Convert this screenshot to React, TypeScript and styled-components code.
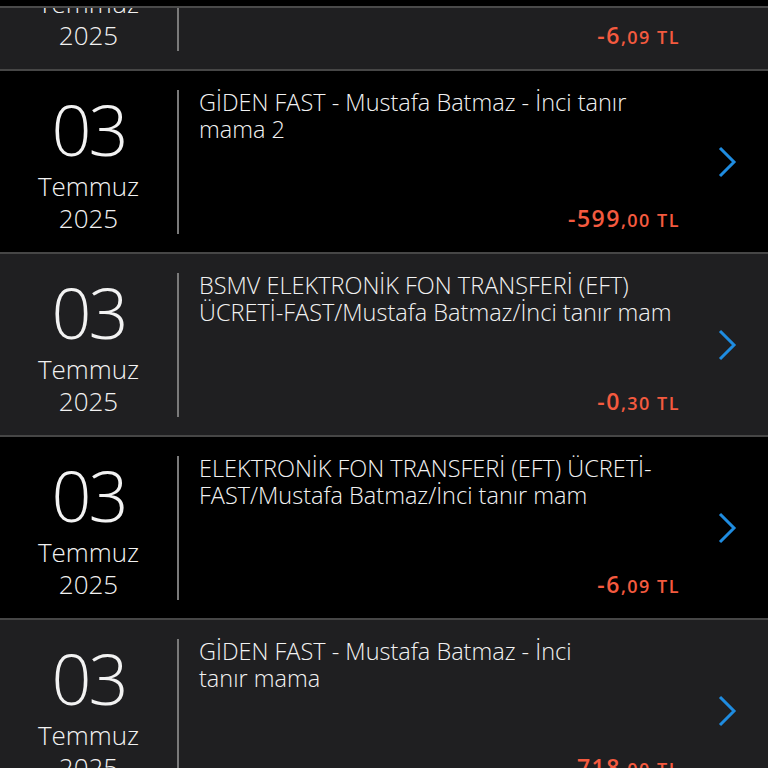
import styled, { createGlobalStyle } from 'styled-components';

const GlobalStyle = createGlobalStyle`
  html, body {
    margin: 0;
    padding: 0;
    background: #000;
    overflow: hidden;
  }
  body {
    font-family: "Open Sans", "Noto Sans", "DejaVu Sans", sans-serif;
    color: #f2f2f2;
  }
`;

const TopEdge = styled.div`
  position: fixed;
  top: 0;
  left: 0;
  right: 0;
  height: 6px;
  background: #000;
  border-bottom: 2px solid #4a4a4a;
  z-index: 2;
`;

const List = styled.div`
  display: flex;
  flex-direction: column;
  margin-top: -112px;
`;

const Row = styled.div<{ $alt: boolean }>`
  display: flex;
  height: 181px;
  background: ${(p) => (p.$alt ? '#1f1f21' : '#000')};
  border-bottom: 2px solid #464646;
`;

const DateCol = styled.div`
  width: 177px;
  flex-shrink: 0;
  display: flex;
  flex-direction: column;
  align-items: center;
  padding-top: 20px;
  box-sizing: border-box;
  font-weight: 300;
`;

const Day = styled.div`
  font-size: 70px;
  line-height: 76px;
  letter-spacing: -3px;
  margin-bottom: 3px;
`;

const DateLine = styled.div`
  font-size: 26px;
  line-height: 32px;
`;

const Divider = styled.div`
  width: 2px;
  margin: 19px 0 18px;
  background: #7a7a7a;
  flex-shrink: 0;
`;

const Body = styled.div`
  flex: 1;
  display: flex;
  flex-direction: column;
  justify-content: space-between;
  padding: 18px 0 19px 20px;
  min-width: 0;
`;

const Description = styled.div`
  font-size: 23.5px;
  line-height: 27px;
  font-weight: 300;
  white-space: nowrap;
`;

const Amount = styled.div`
  align-self: flex-end;
  color: #f45a3f;
  font-weight: 600;
  font-size: 23px;
  line-height: 26px;
  letter-spacing: 1.5px;
  margin-right: -1px;
  white-space: nowrap;
`;

const Cents = styled.span`
  font-size: 18px;
`;

const ChevronCol = styled.div`
  width: 89px;
  flex-shrink: 0;
  display: flex;
  align-items: center;
  justify-content: center;
  padding-left: 7px;
  box-sizing: border-box;
`;

const Chevron = () => (
  <svg width="20" height="32" viewBox="0 0 20 32" fill="none">
    <polyline
      points="3,2 17,16 3,30"
      stroke="#1f8ce0"
      strokeWidth="3"
      strokeLinecap="butt"
      strokeLinejoin="miter"
    />
  </svg>
);

type Tx = {
  lines: string[];
  whole: string;
  cents: string;
  chevron: boolean;
};

const rows: Tx[] = [
  { lines: [], whole: '-6', cents: ',09 TL', chevron: false },
  {
    lines: ['GİDEN FAST - Mustafa Batmaz - İnci tanır', 'mama 2'],
    whole: '-599',
    cents: ',00 TL',
    chevron: true,
  },
  {
    lines: ['BSMV ELEKTRONİK FON TRANSFERİ (EFT)', 'ÜCRETİ-FAST/Mustafa Batmaz/İnci tanır mam'],
    whole: '-0',
    cents: ',30 TL',
    chevron: true,
  },
  {
    lines: ['ELEKTRONİK FON TRANSFERİ (EFT) ÜCRETİ-', 'FAST/Mustafa Batmaz/İnci tanır mam'],
    whole: '-6',
    cents: ',09 TL',
    chevron: true,
  },
  {
    lines: ['GİDEN FAST - Mustafa Batmaz - İnci', 'tanır mama'],
    whole: '-718',
    cents: ',00 TL',
    chevron: true,
  },
];

export default function App() {
  return (
    <>
      <GlobalStyle />
      <TopEdge />
      <List>
        {rows.map((tx, i) => (
          <Row key={i} $alt={i % 2 === 0}>
            <DateCol>
              <Day>03</Day>
              <DateLine>Temmuz</DateLine>
              <DateLine>2025</DateLine>
            </DateCol>
            <Divider />
            <Body>
              <Description>
                {tx.lines.map((l, j) => (
                  <div key={j}>{l}</div>
                ))}
              </Description>
              <Amount>
                {tx.whole}
                <Cents>{tx.cents}</Cents>
              </Amount>
            </Body>
            <ChevronCol>{tx.chevron && <Chevron />}</ChevronCol>
          </Row>
        ))}
      </List>
    </>
  );
}
